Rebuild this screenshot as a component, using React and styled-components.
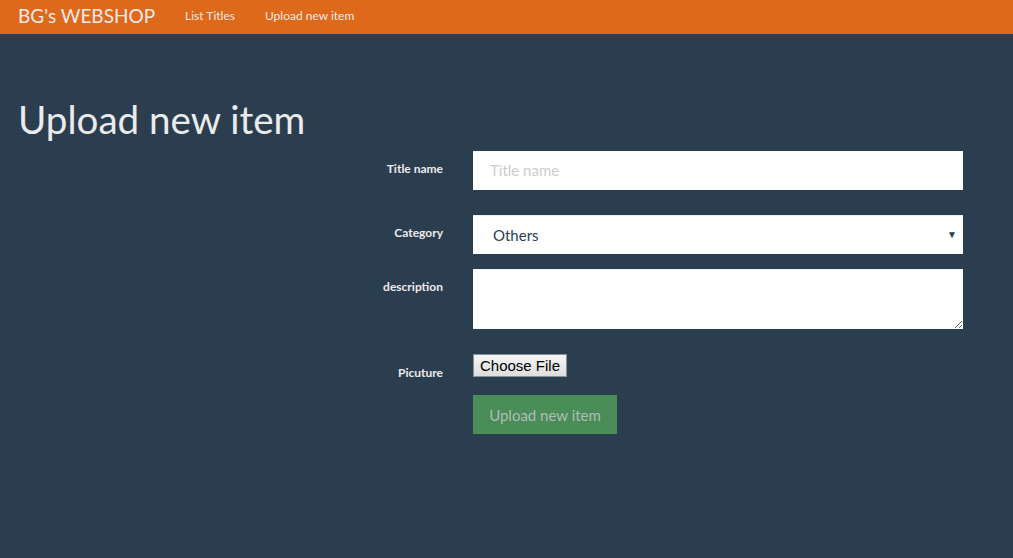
import React from "react";
import styled, { createGlobalStyle } from "styled-components";

const GlobalStyle = createGlobalStyle`
    body {
        margin: 0;
        background: #2b3e50;
        color: #ebebeb;
        font-family: Lato, "Open Sans", sans-serif;
        font-size: 15px;
    }
`;

export default function App() {
    return (
        <>
            <GlobalStyle />
            <Navbar>
                <Brand>BG's WEBSHOP</Brand>
                <NavLink>List Titles</NavLink>
                <NavLink>Upload new item</NavLink>
            </Navbar>
            <Page>
                <Heading>Upload new item</Heading>
                <Form>
                    <Label $top={10}>Title name</Label>
                    <Input placeholder="Title name" />

                    <Label $top={10}>Category</Label>
                    <SelectWrap>
                        <Select defaultValue="Others">
                            <option>Others</option>
                        </Select>
                        <Arrow>▼</Arrow>
                    </SelectWrap>

                    <Label $top={10}>description</Label>
                    <TextArea />

                    <Label $top={11}>Picuture</Label>
                    <FileButton type="button">Choose File</FileButton>

                    <span />
                    <Submit type="button" disabled>
                        Upload new item
                    </Submit>
                </Form>
            </Page>
        </>
    );
}

const Navbar = styled.div`
    display: flex;
    align-items: center;
    box-sizing: border-box;
    height: 34px;
    padding: 0 0 3px 18px;
    background: #df691a;
`;

const Brand = styled.span`
    font-size: 19px;
    color: #ebebeb;
    margin-right: 30px;
`;

const NavLink = styled.span`
    font-size: 12px;
    color: #ebebeb;
    margin-right: 30px;
`;

const Page = styled.div`
    padding: 0 50px 0 18px;
`;

const Heading = styled.h1`
    margin: 61px 0 0;
    font-size: 38.6px;
    font-weight: 400;
    line-height: 48px;
    color: #ebebeb;
`;

const Form = styled.div`
    display: grid;
    grid-template-columns: 425px 490px;
    column-gap: 30px;
    margin-top: 8px;
`;

const Label = styled.label`
    text-align: right;
    font-size: 12px;
    font-weight: 700;
    padding-top: ${(p) => p.$top}px;
`;

const Input = styled.input`
    box-sizing: border-box;
    height: 39px;
    width: 100%;
    border: none;
    padding: 0 17px 1px;
    font-family: Lato, sans-serif;
    font-size: 15px;
    color: #2b3e50;
    margin-bottom: 25px;
    outline: none;

    &::placeholder {
        color: #cccccc;
    }
`;

const SelectWrap = styled.div`
    position: relative;
    margin-bottom: 15px;
`;

const Select = styled.select`
    box-sizing: border-box;
    appearance: none;
    height: 39px;
    width: 100%;
    border: none;
    border-top: 1px solid #f0f0f0;
    border-radius: 0;
    background: #fff;
    padding: 0 20px 1px;
    font-family: Lato, sans-serif;
    font-size: 15px;
    color: #2b3e50;
    outline: none;
`;

const Arrow = styled.span`
    position: absolute;
    right: 6px;
    top: 13px;
    font-size: 10px;
    color: #2b3e50;
    pointer-events: none;
`;

const TextArea = styled.textarea`
    box-sizing: border-box;
    height: 60px;
    width: 100%;
    border: none;
    border-top: 1px solid #f0f0f0;
    border-radius: 0;
    margin: 0 0 25px;
    padding: 8px 17px;
    outline: none;
`;

const FileButton = styled.button`
    justify-self: start;
    box-sizing: border-box;
    height: 23px;
    width: 94px;
    padding: 0;
    border: 1px solid #8e8e8e;
    border-radius: 0;
    background: linear-gradient(#f5f5f5, #dddddd);
    font-family: "Liberation Sans", Arial, sans-serif;
    font-size: 15px;
    color: #000;
    margin-bottom: 18px;
`;

const Submit = styled.button`
    justify-self: start;
    height: 39px;
    width: 144px;
    border: none;
    border-radius: 0;
    background: #4b8d58;
    color: #b0bcb5;
    font-family: Lato, sans-serif;
    font-size: 15px;
    padding: 0;
`;
